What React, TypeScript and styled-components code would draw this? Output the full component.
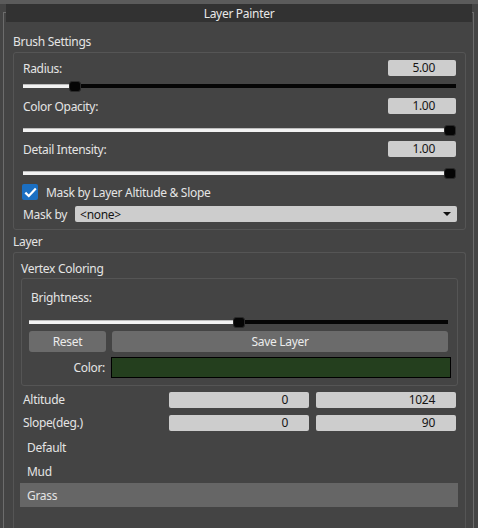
import styled, { createGlobalStyle } from "styled-components";

const Global = createGlobalStyle`
  html, body { margin: 0; padding: 0; background: #444444; }
  body {
    font-family: "Noto Sans", "Open Sans", sans-serif;
    font-size: 12px;
    letter-spacing: -0.3px;
    color: #e4e4e4;
  }
`;

// ─── Window shell ─────────────────────────────────────────────
const Window = styled.div`
  width: 478px;
  height: 528px;
  overflow: hidden;
  background: #444444;
`;

const TopStrip = styled.div`
  height: 4px;
  background: #5b5b5b;
`;

const Frame = styled.div`
  margin: 8px 4px 0 3px;
  height: 600px;
  border: 1px solid #6c6c6c;
  border-bottom: none;
`;

const TitleBar = styled.div`
  margin: -9px 1px 0 2px;
  height: 18px;
  background: #323232;
  display: flex;
  align-items: center;
  justify-content: center;
  color: #e8e8e8;
`;

const Body = styled.div`
  display: flex;
  flex-direction: column;
  padding: 0 7px 0 9px;
`;

const SectionLabel = styled.div<{ $mt: number }>`
  height: 16px;
  line-height: 16px;
  margin-top: ${({ $mt }) => $mt}px;
  margin-bottom: 2px;
`;

const GroupBox = styled.div<{ $pad: string; $open?: boolean }>`
  display: flex;
  flex-direction: column;
  border: 1px solid #555555;
  border-radius: 3px;
  padding: ${({ $pad }) => $pad};
  ${({ $open }) => ($open ? "border-bottom: none; min-height: 400px;" : "")}
`;

const InnerBox = styled.div`
  display: flex;
  flex-direction: column;
  border: 1px solid #555555;
  border-radius: 3px;
  padding: 10px 9px 7px 7px;
  margin: 2px 0 0 1px;
`;

// ─── Rows ─────────────────────────────────────────────────────
const Row = styled.div<{ $mt?: number; $h?: number }>`
  display: flex;
  align-items: center;
  height: ${({ $h }) => $h ?? 16}px;
  margin-top: ${({ $mt }) => $mt ?? 0}px;
`;

const Label = styled.span<{ $indent?: number }>`
  flex: 1;
  white-space: nowrap;
  margin-left: ${({ $indent }) => $indent ?? 0}px;
`;

const ValueBox = styled.div<{ $w?: number }>`
  width: ${({ $w }) => $w ?? 68}px;
  height: 16px;
  box-sizing: border-box;
  background: #cdcdcd;
  border-radius: 2px;
  color: #151515;
  text-align: right;
  padding-right: 21px;
  line-height: 16px;
`;

// ─── Slider ───────────────────────────────────────────────────
const SliderRow = styled.div<{ $mt: number }>`
  display: flex;
  align-items: center;
  height: 16px;
  margin-top: ${({ $mt }) => $mt}px;
`;

const Fill = styled.div`
  height: 4px;
  background: #f2f2f2;
  box-shadow: inset 0 1px 0 #bdbdbd;
`;

const Rest = styled.div`
  height: 4px;
  background: #050505;
`;

const Thumb = styled.div`
  width: 12px;
  height: 11px;
  box-sizing: border-box;
  flex-shrink: 0;
  background: #050505;
  border: 1px solid #2a2a2a;
  border-radius: 3px;
`;

function Slider({ value, mt }: { value: number; mt: number }) {
  return (
    <SliderRow $mt={mt}>
      <Fill style={{ flex: value }} />
      <Thumb />
      <Rest style={{ flex: 1 - value }} />
    </SliderRow>
  );
}

// ─── Controls ─────────────────────────────────────────────────
const Check = styled.div`
  width: 16px;
  height: 16px;
  margin-left: -1px;
  margin-right: 8px;
  border-radius: 2px;
  background: #1b6fc2;
  display: flex;
  align-items: center;
  justify-content: center;
`;

const Select = styled.div`
  flex: 1;
  height: 16px;
  margin-left: 8px;
  margin-right: -1px;
  background: #cdcdcd;
  border-radius: 2px;
  color: #151515;
  display: flex;
  align-items: center;
  padding: 0 6px 0 5px;
`;

const SelectText = styled.span`
  flex: 1;
`;

const Caret = styled.span`
  width: 0;
  height: 0;
  border-left: 4px solid transparent;
  border-right: 4px solid transparent;
  border-top: 4px solid #111;
`;

const ButtonRow = styled.div`
  display: grid;
  grid-template-columns: 77px 1fr;
  gap: 6px;
  margin-top: 1px;
`;

const Button = styled.div`
  height: 21px;
  border-radius: 3px;
  background: #6b6b6b;
  color: #ececec;
  display: flex;
  align-items: center;
  justify-content: center;
`;

const ColorRow = styled.div`
  display: flex;
  align-items: center;
  margin-top: 5px;
  margin-right: -3px;
`;

const ColorLabel = styled.span`
  width: 76px;
  text-align: right;
  margin-right: 6px;
`;

const Swatch = styled.div`
  flex: 1;
  height: 21px;
  box-sizing: border-box;
  border: 1px solid #000;
  background: #243f1e;
`;

const RangeRow = styled.div<{ $mt: number }>`
  display: grid;
  grid-template-columns: 139px 140px 140px;
  gap: 7px;
  align-items: center;
  height: 16px;
  margin: ${({ $mt }) => $mt}px 0 0 3px;
`;

const RangeLabel = styled.span``;

const List = styled.div`
  display: flex;
  flex-direction: column;
  margin-top: 5px;
`;

const ListItem = styled.div<{ $selected?: boolean }>`
  height: 24px;
  display: flex;
  align-items: center;
  padding-left: 7px;
  background: ${({ $selected }) => ($selected ? "#666666" : "transparent")};
`;

const LAYERS = ["Default", "Mud", "Grass"];

export default function App() {
  return (
    <Window>
      <Global />
      <TopStrip />
      <Frame>
        <TitleBar>Layer Painter</TitleBar>
        <Body>
          <SectionLabel $mt={12}>Brush Settings</SectionLabel>
          <GroupBox $pad="7px 9px 7px 9px">
            <Row>
              <Label>Radius:</Label>
              <ValueBox>5.00</ValueBox>
            </Row>
            <Slider value={0.109} mt={2} />
            <Row $mt={4}>
              <Label>Color Opacity:</Label>
              <ValueBox>1.00</ValueBox>
            </Row>
            <Slider value={1} mt={8} />
            <Row $mt={3}>
              <Label>Detail Intensity:</Label>
              <ValueBox>1.00</ValueBox>
            </Row>
            <Slider value={1} mt={8} />
            <Row $mt={3}>
              <Check>
                <svg width="13" height="11" viewBox="0 0 13 11">
                  <path d="M1.3 5.6 L4.8 9 L11.8 1.6" fill="none" stroke="#fff" strokeWidth="2.2" />
                </svg>
              </Check>
              <Label>Mask by Layer Altitude &amp; Slope</Label>
            </Row>
            <Row $mt={6}>
              <span>Mask by</span>
              <Select>
                <SelectText>&lt;none&gt;</SelectText>
                <Caret />
              </Select>
            </Row>
          </GroupBox>

          <SectionLabel $mt={4}>Layer</SectionLabel>
          <GroupBox $pad="7px 7px 0 6px" $open>
            <Row>
              <Label $indent={1}>Vertex Coloring</Label>
            </Row>
            <InnerBox>
              <Row>
                <Label $indent={2}>Brightness:</Label>
              </Row>
              <Slider value={0.5} mt={9} />
              <ButtonRow>
                <Button>Reset</Button>
                <Button>Save Layer</Button>
              </ButtonRow>
              <ColorRow>
                <ColorLabel>Color:</ColorLabel>
                <Swatch />
              </ColorRow>
            </InnerBox>
            <RangeRow $mt={5}>
              <RangeLabel>Altitude</RangeLabel>
              <ValueBox $w={140}>0</ValueBox>
              <ValueBox $w={140}>1024</ValueBox>
            </RangeRow>
            <RangeRow $mt={7}>
              <RangeLabel>Slope(deg.)</RangeLabel>
              <ValueBox $w={140}>0</ValueBox>
              <ValueBox $w={140}>90</ValueBox>
            </RangeRow>
            <List>
              {LAYERS.map((name) => (
                <ListItem key={name} $selected={name === "Grass"}>
                  {name}
                </ListItem>
              ))}
            </List>
          </GroupBox>
        </Body>
      </Frame>
    </Window>
  );
}
